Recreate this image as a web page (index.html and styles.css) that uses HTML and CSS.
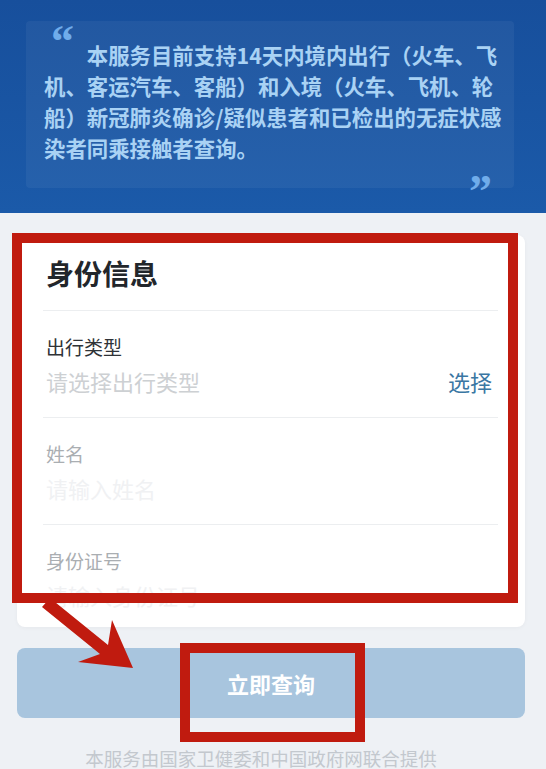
FILE: index.html
```html
<!DOCTYPE html>
<html lang="zh-CN">
<head>
<meta charset="utf-8">
<title>同乘接触者查询</title>
<link rel="stylesheet" href="styles.css">
</head>
<body>
<header class="banner">
  <div class="quote-box">
    <div class="q-open">“</div>
    <p class="notice">本服务目前支持14天内境内出行（火车、飞机、客运汽车、客船）和入境（火车、飞机、轮船）新冠肺炎确诊/疑似患者和已检出的无症状感染者同乘接触者查询。</p>
    <div class="q-close">”</div>
  </div>
</header>
<main class="content">
  <section class="card">
    <h2 class="card-title">身份信息</h2>
    <div class="field">
      <div class="label">出行类型</div>
      <div class="input-row"><span class="placeholder">请选择出行类型</span><span class="pick">选择</span></div>
    </div>
    <div class="field field-faded">
      <div class="label">姓名</div>
      <div class="input-row"><span class="placeholder">请输入姓名</span></div>
    </div>
    <div class="field field-faded field-last">
      <div class="label">身份证号</div>
      <div class="input-row"><span class="placeholder">请输入身份证号</span></div>
    </div>
  </section>
  <button class="submit" type="button">立即查询</button>
  <p class="footer">本服务由国家卫健委和中国政府网联合提供</p>
</main>
<div class="mark mark-card"></div>
<div class="mark mark-button"></div>
<svg class="arrow" width="546" height="769" viewBox="0 0 546 769" aria-hidden="true">
  <polygon points="50,598 108,645 112,620 133,668 78,662 100,654 42,607" fill="#c01b0f"/>
</svg>
</body>
</html>
```

FILE: styles.css
```css
html, body {
  margin: 0;
  padding: 0;
  height: 769px;
  overflow: hidden;
}
body {
  position: relative;
  background: #eef1f5;
  font-family: "Noto Sans CJK SC", "Noto Sans", sans-serif;
}

.banner {
  height: 213px;
  box-sizing: border-box;
  padding: 21px 32px 0 26px;
  background: linear-gradient(#174f9c, #1b5aa9);
}
.quote-box {
  height: 167px;
  box-sizing: border-box;
  padding: 0 10px 0 18px;
  background: rgba(255, 255, 255, 0.05);
  border-radius: 4px;
  overflow: visible;
}
.q-open, .q-close {
  font-family: "Liberation Serif", serif;
  font-weight: 700;
  font-size: 46px;
  line-height: 40px;
  color: #70acea;
  overflow: visible;
}
.q-open {
  height: 17.9px;
  padding-top: 0.6px;
  padding-left: 7px;
}
.q-close {
  height: 16.4px;
  margin-top: 8.1px;
  text-align: right;
  padding-right: 12px;
}
.notice {
  margin: 0;
  width: 21.5em;
  font-size: 21.4px;
  line-height: 31px;
  font-weight: 700;
  color: #a9d2f4;
  text-indent: 2em;
}

.content {
  padding: 22px 21px 0 17px;
}
.card {
  background: #fff;
  border-radius: 8px;
  box-shadow: 0 1px 4px rgba(0, 0, 0, 0.04);
  padding: 0 27px 0 26px;
}
.card-title {
  margin: 0;
  padding: 18px 0 17px 3px;
  font-size: 28px;
  line-height: 40px;
  font-weight: 700;
  color: #22262b;
}
.field {
  border-top: 1px solid #eceef0;
  padding: 23px 6px 21px 3px;
}
.field-last {
  padding-bottom: 17px;
}
.label {
  font-size: 19px;
  line-height: 26px;
  color: #2f3337;
}
.input-row {
  margin-top: 6px;
  display: flex;
  justify-content: space-between;
  font-size: 22px;
  line-height: 30px;
}
.placeholder {
  color: #cdd0d3;
}
.pick {
  color: #3a77a3;
}
.field-faded .label {
  color: #aaaeb2;
}
.field-faded .placeholder {
  color: #f0f1f3;
}

.submit {
  display: block;
  width: 100%;
  height: 70px;
  margin-top: 21px;
  border: 0;
  border-radius: 8px;
  background: #a8c5de;
  color: #fff;
  font-family: "Noto Sans CJK SC", sans-serif;
  font-size: 22px;
  font-weight: 700;
  padding: 0;
}
.footer {
  margin: 29px 0 0;
  padding-right: 20px;
  text-align: center;
  font-size: 18.5px;
  line-height: 22px;
  color: #c3c8ce;
}

.mark {
  position: absolute;
  box-sizing: border-box;
  border: 10px solid #c01b0f;
}
.mark-card {
  left: 12px;
  top: 233px;
  width: 506px;
  height: 370px;
}
.mark-button {
  left: 180px;
  top: 643px;
  width: 185px;
  height: 99px;
}
.arrow {
  position: absolute;
  left: 0;
  top: 0;
  pointer-events: none;
}
```
